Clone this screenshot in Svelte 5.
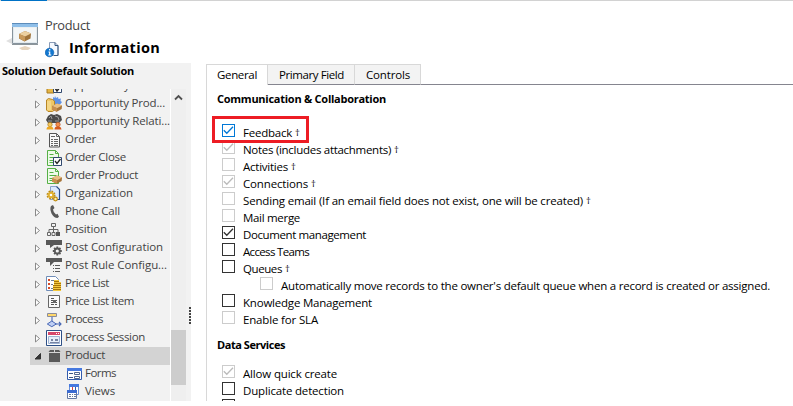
<script>
  function fit(node, width) {
    const natural = node.getBoundingClientRect().width;
    const count = node.textContent.length;
    node.style.letterSpacing = `${(width - natural) / count}px`;
  }

  const tree = [
    { name: 'Opportunity Close', icon: 'close', w: 96 },
    { name: 'Opportunity Prod...', icon: 'oppprod', w: 100 },
    { name: 'Opportunity Relati...', icon: 'opprel', w: 105 },
    { name: 'Order', icon: 'order', w: 31 },
    { name: 'Order Close', icon: 'orderclose', w: 61 },
    { name: 'Order Product', icon: 'orderprod', w: 73 },
    { name: 'Organization', icon: 'org', w: 68 },
    { name: 'Phone Call', icon: 'phone', w: 55 },
    { name: 'Position', icon: 'position', w: 42 },
    { name: 'Post Configuration', icon: 'postcfg', w: 98 },
    { name: 'Post Rule Configu...', icon: 'postrule', w: 102 },
    { name: 'Price List', icon: 'price', w: 44 },
    { name: 'Price List Item', icon: 'priceitem', w: 69 },
    { name: 'Process', icon: 'process', w: 38 },
    { name: 'Process Session', icon: 'session', w: 80 },
    { name: 'Product', icon: 'product', w: 40, selected: true },
    { name: 'Forms', icon: 'forms', w: 31, child: true },
    { name: 'Views', icon: 'views', w: 30, child: true }
  ];

  const communication = [
    { name: 'Feedback', w: 49, dagger: true, checked: true, state: 'focus' },
    { name: 'Notes (includes attachments)', w: 148, dagger: true, checked: true, state: 'off' },
    { name: 'Activities', w: 45, dagger: true, state: 'off' },
    { name: 'Connections', w: 65, dagger: true, checked: true, state: 'off' },
    { name: 'Sending email (If an email field does not exist, one will be created)', w: 340, dagger: true, state: 'off' },
    { name: 'Mail merge', w: 57, state: 'off' },
    { name: 'Document management', w: 123, checked: true },
    { name: 'Access Teams', w: 66 },
    { name: 'Queues', w: 39, dagger: true },
    { name: "Automatically move records to the owner's default queue when a record is created or assigned.", w: 489, state: 'off', nested: true },
    { name: 'Knowledge Management', w: 129 },
    { name: 'Enable for SLA', w: 75, state: 'off' }
  ];

  const dataServices = [
    { name: 'Allow quick create', w: 94, checked: true, state: 'off' },
    { name: 'Duplicate detection', w: 101 },
    { name: '', w: 0 }
  ];
</script>

{#snippet box3d()}
  <path d="M6 10l5-2.500 5 2-.3 3.500-5 2.700L6 13.500z" fill="#a8753a" />
  <path d="M6 10l5-2.500 5 2-5 2.700z" fill="#e9bf84" />
  <path d="M11 12v3.700L6 13.500V10z" fill="#c98f4e" />
{/snippet}

{#snippet sheet(color, fill)}
  <path d="M1.500.5h8l3 3v12h-11z" fill={fill} stroke={color} />
  <path d="M9.500.5v3h3M3.500 4.500h4M3.500 7.500h7M3.500 10.500h7M3.500 12.500h5" fill="none" stroke={color} />
{/snippet}

{#snippet icon(kind)}
  <svg class="icon" width="16" height="16" viewBox="0 0 16 16">
    {#if kind === 'close'}
      <path d="M1 1h7v14H1z" fill="#e5b545" stroke="#a97b20" />
      <path d="M7.500 4.500h8v10h-8z" fill="#fff" stroke="#31496f" />
      <path d="M9 10l2 3 4-5" fill="none" stroke="#222" stroke-width="1.500" />
    {:else if kind === 'oppprod'}
      <path d="M9 0l1 2 2-1 .5 2 2.500-.5-.5 2.500L16 6l-1.500 2L8 9 5 4l2-.8L7 1l1.500 1z" fill="#5f92e6" />
      <path d="M.5 4l2-1.500 4 1 2 1.500v9l-2 1.500H2L.5 14z" fill="#efc766" stroke="#b88625" />
      <path d="M2 5v9M4 5v9" stroke="#fae6a5" />
      {@render box3d()}
    {:else if kind === 'opprel'}
      <path d="M2 2l3-2 3 1 3-1 4 2 1 4-3 3H2L0 6z" fill="#4a4a4a" />
      <path d="M3 4l2-2 1 3m3-3l3 1 1 3M2 7h4m3 0h4" fill="none" stroke="#999" />
      <circle cx="4" cy="10.500" r="2.200" fill="#f4c65c" stroke="#9b7013" stroke-width=".6" />
      <circle cx="12" cy="10.500" r="2.200" fill="#f6914c" stroke="#b04a17" stroke-width=".6" />
      <path d="M.5 15.500q0-3.500 3.500-3 3-.5 3.500 3z" fill="#eda721" />
      <path d="M8.500 15.500q0-3.500 3.500-3 3-.5 3.500 3z" fill="#d65a1d" />
    {:else if kind === 'order'}
      <path d="M3.500 1.500h7l3 3v10.500h-10z" fill="#fafafa" stroke="#555" />
      <path d="M10.500 1.500v3h3M5 4.500h4M5 7.500h2m1 0h4M5 9.500h2m1 0h4M5 11.500h2m1 0h4M5 13.500h2m1 0h4" fill="none" stroke="#666" />
    {:else if kind === 'orderclose'}
      {@render sheet('#55b045', '#eefbe9')}
      <path d="M7.500 7.500h8v8h-8z" fill="#fff" stroke="#31496f" />
      <path d="M9 11l2 2.500 3.500-4.500" fill="none" stroke="#222" stroke-width="1.300" />
    {:else if kind === 'orderprod'}
      {@render sheet('#55b045', '#eefbe9')}
      {@render box3d()}
    {:else if kind === 'org'}
      <path d="M4.500.5h6l3 3v10h-9z" fill="#dceaff" stroke="#8aa3cc" />
      <path d="M10.500.5l3 3v10H9" fill="none" stroke="#294c88" stroke-width="1.200" />
      <circle cx="5" cy="9" r="3.500" fill="none" stroke="#b98a17" stroke-width="2" stroke-dasharray="1.600 1.150" />
      <circle cx="5" cy="9" r="2.300" fill="#fff" stroke="#e0b02f" stroke-width="2" />
      <circle cx="9.500" cy="13" r="1.800" fill="#fff1a8" stroke="#c18d12" stroke-width="1.200" />
    {:else if kind === 'phone'}
      <path d="M5 2l2-1 1.500 3L7 5.500q.3 3 3 5l1.500-.8 1.500 3-1.500 1.300Q8 14 5.500 9.500 3.500 4.500 5 2z" fill="#595959" />
    {:else if kind === 'position'}
      <path d="M5.500 1.500h4v3h-4zM1.500 10.500h3v3h-3zM6 10.500h3v3H6z" fill="none" stroke="#666" />
      <path d="M7.500 5v5M3 10V7.500h9V10" fill="none" stroke="#666" />
      <path d="M10 10h4v4h-4z" fill="#555" />
    {:else if kind === 'postcfg'}
      <path d="M0 0h16v5H8L4 8V5H0z" fill="#595959" />
      <circle cx="11.300" cy="11" r="5" fill="#f2f2f2" />
      <path d="M11.300 6.500v9M6.800 11h9M8.100 7.800l6.400 6.400M14.500 7.800l-6.400 6.400" stroke="#595959" stroke-width="1.800" />
      <circle cx="11.300" cy="11" r="2.500" fill="#f2f2f2" stroke="#595959" stroke-width="1.800" />
    {:else if kind === 'postrule'}
      <path d="M0 0h16v4H8L4 8V4H0z" fill="#595959" />
      <path d="M7 7.500h1m1 0h5M7 10.500h1m1 0h5M7 13.500h1m1 0h5" stroke="#595959" />
    {:else if kind === 'price'}
      <path d="M.5.5h9l3 3v11H.5z" fill="#fff" stroke="#6f8db9" />
      <path d="M2 4h2M2 8h2M2 12h2" stroke="#d44b28" stroke-width="2" />
      <path d="M5 4.500h3M5 8.500h2M5 12.500h2" stroke="#6f7c91" />
      <path d="M8 4h5v2h2v9H7V9h1z" fill="#a8760a" />
      <path d="M8 4.500h5M8 6.500h7M8 8.500h7M7 10.500h8M7 12.500h8M7 14.500h8" stroke="#f4c93e" />
    {:else if kind === 'priceitem'}
      <path d="M2.500 1.500h11v12h-11z" fill="#fafafa" stroke="#666" />
      <path d="M5 4.500h3M5 6.500h6M5 8.500h6M5 10.500h3m1 0h2" stroke="#555" />
      <path d="M7 6h3v3H7z" fill="#666" />
    {:else if kind === 'process'}
      <path d="M1.500 1.500h9v3h-9z" fill="#ffd76a" stroke="#8a8c9c" />
      <path d="M6 5v4.500M10 12h5m-2-2l2 2-2 2" fill="none" stroke="#4968b5" stroke-width="1.100" />
      <path d="M5.800 9l4.500 3-4.500 2.700L1.300 12z" fill="#bfcff4" stroke="#4968b5" />
    {:else if kind === 'session'}
      <path d="M.5.5h15v15H.5z" fill="#fff" stroke="#2d4f86" />
      <path d="M2 2h12v3H2z" fill="#d6476b" />
      <path d="M10 3.500h1m1 0h1" stroke="#fff" />
      <path d="M2.500 6.500h11v7h-11z" fill="#e8effa" stroke="#9fb3d3" />
      <path d="M5 9h2v2H5zM9 9h3v2H9zM4 12h9v1H4z" fill="#7784a3" />
    {:else if kind === 'product'}
      <path d="M4 2h4v2H2.500zM9 2h4l1.500 2H9zM3 5h11v9H3z" fill="#595959" />
    {:else if kind === 'forms'}
      <path d="M1.500 2.500h14v11h-14z" fill="#fff" stroke="#335cad" />
      <path d="M1 2h15v3H1z" fill="#4679df" />
      <path d="M3 7.500h4M3 11.500h4" stroke="#3d5685" />
      <path d="M8.500 6.500h5v2h-5zM8.500 10.500h5v2h-5z" fill="#fff" stroke="#52678f" />
    {:else if kind === 'views'}
      <path d="M3.500.5h9v10h-9z" fill="#fff" stroke="#6a8fd8" />
      <path d="M3 0h10v3H3z" fill="#4679df" />
      <path d="M6.500 3v3" stroke="#d84242" /><path d="M9.500 3v3" stroke="#335cad" />
      <path d="M1.500 6.500h9v8h-9z" fill="#fff" stroke="#6278a4" />
      <path d="M1 6h10v3H1z" fill="#3b6bd0" />
      <path d="M3 10.500h2m1 0h1m1 0h2M3 12.500h2m1 0h1m1 0h2" stroke="#6a789a" />
    {/if}
  </svg>
{/snippet}

{#snippet option(o)}
  <div class="option" class:nested={o.nested}>
    <span class="check {o.state ?? ''}">
      {#if o.checked}
        <svg width="11" height="11" viewBox="0 0 11 11"><path d="M.8 5.300l3 3L10 1.800" fill="none" stroke="currentColor" stroke-width="1.300" /></svg>
      {/if}
    </span>
    {#if o.name}
      <span class="label" use:fit={o.w}>{o.name}</span>
      {#if o.dagger}<span class="dagger">†</span>{/if}
    {/if}
  </div>
{/snippet}

<div class="window">
  <div class="topline"><i></i></div>
  <header>
    <svg class="entity" width="34" height="30" viewBox="0 0 34 30">
      <path d="M0 20l6-3v6z" fill="#ccc" opacity=".6" />
      <path d="M6.500 2.500h25v20h-25z" fill="#e3eaee" stroke="#87939c" />
      <path d="M6 2h26v4H6z" fill="#8fbfe9" /><path d="M6 2.500h26" stroke="#5d8cba" />
      <path d="M8 6.500h22v14.500H8z" fill="#f3f6f7" />
      <path d="M13 13l6-3 6 2.500-.5 5-6 3-5.500-3z" fill="#a07339" />
      <path d="M13 13l6-3 6 2.500-6 3z" fill="#ecd0a0" />
      <path d="M13 13l6 2.500v5l-5.500-3z" fill="#c8995a" />
      <path d="M6 23.500h26" stroke="#8c959a" />
      <path d="M13 27l6-2 6 2-3 2h-6z" fill="#d9bd99" opacity=".65" />
    </svg>
    <div class="titles">
      <div class="entity-name"><span use:fit={45}>Product</span></div>
      <div class="title">
        <svg width="14" height="16" viewBox="0 0 14 16">
          <path d="M4.500.5h5.500l3 3v10H4.500z" fill="#f5f9ff" stroke="#8a9cb8" />
          <path d="M10 .5v3h3v10H9" fill="none" stroke="#36577f" />
          <circle cx="4.500" cy="10.500" r="4.300" fill="#1277d0" stroke="#075aa8" stroke-width=".6" />
          <path d="M4.700 7v1.500M3.500 10h1.200v3M3.300 13h3" fill="none" stroke="#fff" stroke-width="1.200" />
        </svg>
        <h1><span use:fit={91}>Information</span></h1>
      </div>
    </div>
  </header>

  <main>
    <aside>
      <div class="solution"><span use:fit={132}>Solution Default Solution</span></div>
      <div class="tree-area">
        <div class="tree">
          <div class="rows">
            {#each tree as t}
              <div class="row" class:selected={t.selected} class:child={t.child}>
                {#if !t.child}
                  <svg class="arrow" width="8" height="9" viewBox="0 0 8 9">
                    {#if t.selected}
                      <path d="M6.500 1.500v5.500H1z" fill="#333" stroke="#333" />
                    {:else}
                      <path d="M1.500 1l4 3.500-4 3.500z" fill="#fff" stroke="#8a8a8a" />
                    {/if}
                  </svg>
                {/if}
                {@render icon(t.icon)}
                <span class="name" use:fit={t.w}>{t.name}</span>
              </div>
            {/each}
          </div>
        </div>
        <div class="scroll">
          <svg width="9" height="7" viewBox="0 0 9 7"><path d="M1 5.500l3.500-3.500L8 5.500" fill="none" stroke="#505050" stroke-width="1.800" /></svg>
          <div class="thumb"></div>
        </div>
      </div>
    </aside>
    <div class="splitter"><i></i><i></i><i></i><i></i><i></i><i></i></div>

    <section>
      <nav>
        <div class="tab active"><span use:fit={40}>General</span></div>
        <div class="tab primary"><span use:fit={65}>Primary Field</span></div>
        <div class="tab controls"><span use:fit={44}>Controls</span></div>
        <div class="rest"></div>
      </nav>
      <div class="content">
        <h2><span use:fit={169}>Communication &amp; Collaboration</span></h2>
        <div class="options">
          {#each communication as o}{@render option(o)}{/each}
          <div class="highlight"></div>
        </div>
        <h2 class="second"><span use:fit={68}>Data Services</span></h2>
        <div class="options last">
          {#each dataServices as o}{@render option(o)}{/each}
        </div>
      </div>
    </section>
  </main>
</div>

<style>
  :global(body) { background: #fff; }
  .window { width: 793px; height: 406px; overflow: hidden; background: #fff; font: 11.5px/17px 'Open Sans', 'Noto Sans', sans-serif; color: #000; white-space: nowrap; }
  svg { display: block; flex: none; }
  span { display: inline-block; }
  h1, h2 { margin: 0; }
  .topline { height: 1px; background: #d2d2d2; padding-left: 1px; }
  .topline i { display: block; width: 46px; height: 1px; background: #0072c6; }
  header { display: flex; height: 62px; box-sizing: border-box; padding: 20px 0 0 6px; }
  .titles { padding-left: 5px; margin-top: -6px; }
  .entity-name { font-size: 12.8px; line-height: 20px; height: 20px; color: #444; }
  .title { display: flex; gap: 10px; padding-top: 6px; }
  .title svg { margin-top: 1px; }
  h1 { font-size: 14.5px; line-height: 20px; font-weight: 700; margin-top: -3px; }
  main { display: flex; height: 338px; overflow: hidden; }
  aside { width: 187px; background: #f2f2f2; flex: none; }
  .solution { height: 26px; padding-left: 2px; font-size: 11px; font-weight: 700; line-height: 16px; }
  .tree-area { display: flex; height: 312px; padding-left: 30px; }
  .tree { width: 140px; height: 312px; overflow: hidden; }
  .rows { margin-top: -12px; }
  .row { height: 18px; display: flex; align-items: center; padding-left: 4px; color: #444; }
  .row.child { padding-left: 36px; }
  .row.selected { background: #d3d3d3; }
  .arrow { margin-right: 4px; }
  .icon { margin-right: 3px; }
  .name { line-height: 18px; flex: none; margin-top: -2px; }
  .scroll { width: 16px; box-sizing: border-box; border-left: 1px solid #fff; background: #efefef; padding-top: 5px; }
  .scroll svg { margin: 0 0 229px 3px; }
  .thumb { width: 15px; height: 55px; background: #cdcdcd; }
  .splitter { width: 19px; flex: none; box-sizing: border-box; padding: 244px 0 0 2px; display: flex; flex-direction: column; gap: 1px; background: linear-gradient(to right, #f2f2f2 4px, #fff 4px); }
  .splitter i { width: 2px; height: 2px; background: #444; }
  section { flex: 1; padding-top: 1px; min-width: 0; }
  nav { display: flex; height: 21px; }
  .tab { box-sizing: border-box; height: 21px; border: 1px solid #d8d8d8; border-left: 0; border-bottom-color: #85858f; background: #f3f3f3; line-height: 20px; }
  .tab.active { width: 62px; padding-left: 10px; background: #fff; border-left: 1px solid #d8d8d8; border-bottom: 0; }
  .tab.primary { width: 87px; padding-left: 11px; }
  .tab.controls { width: 66px; padding-left: 11px; }
  .rest { flex: 1; border-bottom: 1px solid #85858f; }
  .content { border-left: 1px solid #d8d8d8; padding: 6px 0 0 10px; height: 310px; }
  h2 { font-size: 11px; line-height: 16px; height: 16px; font-weight: 700; }
  .options { position: relative; padding: 16px 0 0 5px; }
  .option { height: 17px; display: flex; align-items: flex-start; }
  .option.nested { padding-left: 38px; }
  .check { width: 13px; height: 13px; box-sizing: border-box; border: 1px solid #333; color: #333; margin: 1px 8px 0 0; flex: none; }
  .check.off { border-color: #ccc; color: #bbb; }
  .check.focus { border-color: #0078d7; color: #0078d7; }
  .label { height: 17px; margin-top: 1px; flex: none; }
  .dagger { font-size: 9.5px; margin: 1px 0 0 3px; }
  .highlight { position: absolute; left: -5px; top: 9px; width: 97px; height: 27px; box-sizing: border-box; border: 3px solid #ed1c24; }
  h2.second { margin-top: 10px; }
  .options.last { padding-top: 11px; }
</style>
